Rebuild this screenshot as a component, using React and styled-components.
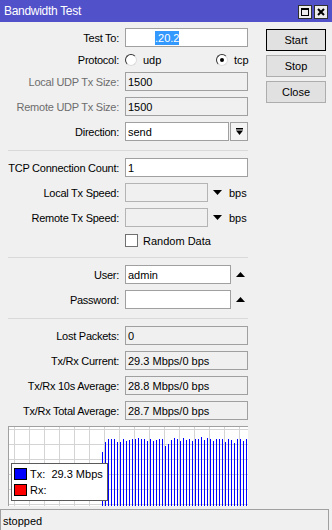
import React from 'react';
import styled, { createGlobalStyle } from 'styled-components';

const GlobalStyle = createGlobalStyle`
  html, body {
    margin: 0;
    padding: 0;
    background: #f0f0f0;
  }
  body {
    font-family: "Liberation Sans", Arial, sans-serif;
    font-size: 11px;
    color: #000;
  }
`;

// bar tops, px from graph top
const barTops = [
  26, 16, 13, 13, 13, 16, 16, 13, 15, 14, 13, 13, 12, 13, 13, 15, 13,
  15, 14, 13, 13, 20, 18, 14, 12, 13, 15, 12, 14, 13, 15, 13, 13, 11,
  14, 12, 13, 15, 13, 13, 13, 16, 13, 14, 17, 13, 13, 15, 13,
];

function Radio({ checked, children }) {
  return (
    <RadioItem>
      <RadioCircle>{checked && <RadioDot />}</RadioCircle>
      {children}
    </RadioItem>
  );
}

function Graph() {
  const vLines = [];
  for (let x = 6; x < 240; x += 15) vLines.push(x);
  const hLines = [];
  for (let y = 3; y < 80; y += 15) hLines.push(y);

  return (
    <GraphBox>
      <svg width="240" height="80" style={{ display: 'block' }}>
        <rect x="0" y="0" width="240" height="80" fill="#fff" />
        {vLines.map((x) => (
          <rect key={`v${x}`} x={x} y="0" width="1" height="80" fill="#d4d4d4" />
        ))}
        {hLines.map((y) => (
          <rect key={`h${y}`} x="0" y={y} width="240" height="1" fill="#d4d4d4" />
        ))}
        {barTops.map((t, i) => (
          <rect key={i} x={94 + i * 3} y={t} width="1" height={80 - t} fill="#0000ff" />
        ))}
        <rect x="0" y="0" width="240" height="1" fill="#a0a0a0" />
        <rect x="0" y="0" width="1" height="80" fill="#a0a0a0" />
      </svg>
      <Legend>
        <LegendRow>
          <Swatch $color="#0000ff" />
          <span>Tx:&nbsp;&nbsp;29.3 Mbps</span>
        </LegendRow>
        <LegendRow>
          <Swatch $color="#ff0000" />
          <span>Rx:</span>
        </LegendRow>
      </Legend>
    </GraphBox>
  );
}

const DownArrow = () => (
  <svg width="9" height="5" viewBox="0 0 9 5"><polygon points="0,0 9,0 4.5,5" fill="#000" /></svg>
);

const UpArrow = () => (
  <svg width="9" height="5" viewBox="0 0 9 5"><polygon points="0,5 9,5 4.5,0" fill="#000" /></svg>
);

export default function App() {
  return (
    <>
      <GlobalStyle />
      <Window>
        <TitleBar>
          <Title>Bandwidth Test</Title>
          <TitleButtons>
            <TitleBtn>
              <svg width="8" height="8" viewBox="0 0 8 8">
                <rect x="0.5" y="0.5" width="7" height="7" fill="none" stroke="#000" />
                <rect x="0" y="0" width="8" height="2" fill="#000" />
              </svg>
            </TitleBtn>
            <TitleBtn>
              <svg width="8" height="8" viewBox="0 0 8 8">
                <path d="M1 1 L7 7 M7 1 L1 7" stroke="#000" strokeWidth="2" />
              </svg>
            </TitleBtn>
          </TitleButtons>
        </TitleBar>

        <Body>
          <Form>
            <Section>
              <Row>
                <Label>Test To:</Label>
                <TextBox $w={123}>
                  <Selected>.20.2</Selected>
                </TextBox>
              </Row>
              <Row $h={13}>
                <Label>Protocol:</Label>
                <RadioGroup>
                  <Radio>udp</Radio>
                  <Radio checked>tcp</Radio>
                </RadioGroup>
              </Row>
              <Row>
                <Label $disabled>Local UDP Tx Size:</Label>
                <TextBox $w={123} $readOnly>1500</TextBox>
              </Row>
              <Row>
                <Label $disabled>Remote UDP Tx Size:</Label>
                <TextBox $w={123} $readOnly>1500</TextBox>
              </Row>
              <Row>
                <Label>Direction:</Label>
                <FieldLine $gap={1}>
                  <TextBox $w={105}>send</TextBox>
                  <DropButton>
                    <svg width="7" height="7" viewBox="0 0 7 7">
                      <rect x="0" y="0" width="7" height="1.5" fill="#000" />
                      <polygon points="0,2.5 7,2.5 3.5,7" fill="#000" />
                    </svg>
                  </DropButton>
                </FieldLine>
              </Row>
            </Section>

            <Separator />

            <Section>
              <Row>
                <Label>TCP Connection Count:</Label>
                <TextBox $w={123}>1</TextBox>
              </Row>
              <Row>
                <Label>Local Tx Speed:</Label>
                <FieldLine>
                  <TextBox $w={83} $readOnly $light />
                  <DownArrow />
                  <Unit>bps</Unit>
                </FieldLine>
              </Row>
              <Row>
                <Label>Remote Tx Speed:</Label>
                <FieldLine>
                  <TextBox $w={83} $readOnly $light />
                  <DownArrow />
                  <Unit>bps</Unit>
                </FieldLine>
              </Row>
              <Row $h={15}>
                <span />
                <CheckItem>
                  <CheckBox />
                  Random Data
                </CheckItem>
              </Row>
            </Section>

            <Separator />

            <Section>
              <Row>
                <Label>User:</Label>
                <FieldLine>
                  <TextBox $w={106}>admin</TextBox>
                  <UpArrow />
                </FieldLine>
              </Row>
              <Row>
                <Label>Password:</Label>
                <FieldLine>
                  <TextBox $w={106} />
                  <UpArrow />
                </FieldLine>
              </Row>
            </Section>

            <Separator />

            <Section>
              <Row>
                <Label>Lost Packets:</Label>
                <TextBox $w={123} $readOnly>0</TextBox>
              </Row>
              <Row>
                <Label>Tx/Rx Current:</Label>
                <TextBox $w={123} $readOnly>29.3 Mbps/0 bps</TextBox>
              </Row>
              <Row>
                <Label>Tx/Rx 10s Average:</Label>
                <TextBox $w={123} $readOnly>28.8 Mbps/0 bps</TextBox>
              </Row>
              <Row>
                <Label>Tx/Rx Total Average:</Label>
                <TextBox $w={123} $readOnly>28.7 Mbps/0 bps</TextBox>
              </Row>
              <Graph />
            </Section>
          </Form>

          <Buttons>
            <Button $default>Start</Button>
            <Button>Stop</Button>
            <Button>Close</Button>
          </Buttons>
        </Body>

        <StatusBar>stopped</StatusBar>
      </Window>
    </>
  );
}

const Window = styled.div`
  width: 332px;
  height: 530px;
  display: flex;
  flex-direction: column;
  background: #f0f0f0;
  overflow: hidden;
`;

const TitleBar = styled.div`
  height: 22px;
  flex: none;
  display: flex;
  align-items: center;
  justify-content: space-between;
  padding: 0 4px 0 4px;
  background: #5151c9;
  box-sizing: border-box;
`;

const Title = styled.div`
  color: #fff;
  font-size: 12px;
  letter-spacing: -0.3px;
`;

const TitleButtons = styled.div`
  display: flex;
  gap: 2px;
  margin-top: 1px;
`;

const TitleBtn = styled.div`
  width: 14px;
  height: 14px;
  box-sizing: border-box;
  border: 1px solid #303030;
  background: #ececec;
  display: flex;
  align-items: center;
  justify-content: center;
`;

const Body = styled.div`
  flex: 1;
  display: flex;
  gap: 18px;
  padding: 6px 0 0 8px;
`;

const Form = styled.div`
  width: 240px;
  display: flex;
  flex-direction: column;
`;

const Section = styled.div`
  display: flex;
  flex-direction: column;
  gap: 6px;
`;

const Separator = styled.div`
  height: 1px;
  background: #d9d9d9;
  margin: 9px 0 7px;
`;

const Row = styled.div`
  display: grid;
  grid-template-columns: 111px 123px;
  column-gap: 6px;
  height: ${(p) => p.$h || 19}px;
  align-items: center;
`;

const Label = styled.div`
  text-align: right;
  white-space: nowrap;
  letter-spacing: -0.25px;
  color: ${(p) => (p.$disabled ? '#6d6d6d' : '#000')};
`;

const TextBox = styled.div`
  width: ${(p) => p.$w}px;
  height: 19px;
  box-sizing: border-box;
  border: 1px solid ${(p) => (p.$light ? '#b4b4b4' : '#a0a0a0')};
  background: ${(p) => (p.$readOnly ? '#f0f0f0' : '#fff')};
  padding: 0 2px;
  display: flex;
  align-items: center;
  white-space: nowrap;
  overflow: hidden;
`;

const Selected = styled.span`
  margin-left: 27px;
  background: #3399ff;
  color: #fff;
  line-height: 14px;
`;

const FieldLine = styled.div`
  display: flex;
  align-items: center;
  gap: ${(p) => (p.$gap !== undefined ? p.$gap : 5)}px;
`;

const DropButton = styled.div`
  width: 18px;
  height: 19px;
  box-sizing: border-box;
  border: 1px solid #a0a0a0;
  background: #f4f4f4;
  display: flex;
  align-items: center;
  justify-content: center;
`;

const Unit = styled.span`
  margin-left: 2px;
`;

const RadioGroup = styled.div`
  display: grid;
  grid-template-columns: 91px 1fr;
  align-items: center;
`;

const RadioItem = styled.div`
  display: flex;
  align-items: center;
  gap: 6px;
`;

const RadioCircle = styled.span`
  width: 12px;
  height: 12px;
  box-sizing: border-box;
  border-radius: 50%;
  border: 1px solid;
  border-color: #333 #dcdcdc #dcdcdc #333;
  background: #fff;
  display: flex;
  align-items: center;
  justify-content: center;
`;

const RadioDot = styled.span`
  width: 4px;
  height: 4px;
  border-radius: 50%;
  background: #000;
`;

const CheckItem = styled.div`
  display: flex;
  align-items: center;
  gap: 5px;
`;

const CheckBox = styled.span`
  width: 13px;
  height: 13px;
  box-sizing: border-box;
  border: 1px solid #707070;
  background: #fff;
`;

const GraphBox = styled.div`
  position: relative;
  width: 240px;
  height: 80px;
`;

const Legend = styled.div`
  position: absolute;
  left: 3px;
  top: 37px;
  width: 97px;
  height: 38px;
  box-sizing: border-box;
  border: 1px solid #5a5a5a;
  background: #fff;
  padding: 3px 2px;
  display: flex;
  flex-direction: column;
  gap: 3px;
`;

const LegendRow = styled.div`
  display: flex;
  align-items: center;
  gap: 3px;
  height: 13px;
`;

const Swatch = styled.span`
  width: 13px;
  height: 12px;
  box-sizing: border-box;
  border: 1px solid #000;
  background: ${(p) => p.$color};
`;

const Buttons = styled.div`
  width: 60px;
  padding-top: 1px;
  display: flex;
  flex-direction: column;
  gap: 4px;
`;

const Button = styled.div`
  height: 22px;
  box-sizing: border-box;
  border: 1px solid ${(p) => (p.$default ? '#000' : '#adadad')};
  background: #e1e1e1;
  display: flex;
  align-items: center;
  justify-content: center;
  font-size: 11px;
`;

const StatusBar = styled.div`
  height: 21px;
  flex: none;
  margin-right: 3px;
  box-sizing: border-box;
  border: 1px solid #a0a0a0;
  border-bottom: none;
  padding: 2px 2px 0;
  display: flex;
  align-items: center;
`;
